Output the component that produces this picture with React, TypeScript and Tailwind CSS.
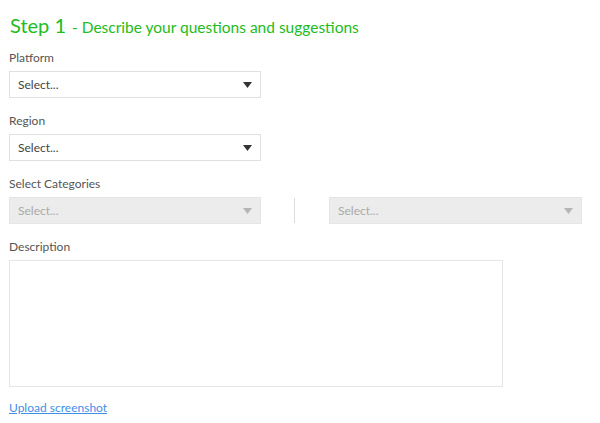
import React from "react";

function Caret({ disabled }: { disabled?: boolean }) {
  return (
    <svg width="9" height="6" viewBox="0 0 9 6" className="shrink-0">
      <path d="M0 0 L9 0 L4.5 6 Z" fill={disabled ? "#b5b5b5" : "#333"} />
    </svg>
  );
}

function SelectBox({ disabled, width }: { disabled?: boolean; width: string }) {
  return (
    <div
      className={`${width} h-[27px] flex items-center justify-between pl-[8px] pr-[8px] border ${
        disabled ? "bg-[#ececec] border-[#e5e5e5] text-[#aaaaaa]" : "bg-white border-[#e0e0e0] text-[#444444]"
      } text-[12px]`}
    >
      <span>Select...</span>
      <Caret disabled={disabled} />
    </div>
  );
}

function Label({ children }: { children: React.ReactNode }) {
  return <div className="text-[12px] leading-[14px] text-[#555555] mb-[6px]">{children}</div>;
}

export default function App() {
  return (
    <div
      className="w-[600px] h-[423px] bg-white pl-[9px] pt-[13px] overflow-hidden"
      style={{ fontFamily: "Lato, 'Open Sans', sans-serif" }}
    >
      <h1 className="flex items-baseline text-[#22bb22] leading-[24px] mb-[12px]">
        <span className="text-[20px] ml-[1px]">Step 1</span>
        <span className="text-[15.5px] ml-[6px]">- Describe your questions and suggestions</span>
      </h1>

      <Label>Platform</Label>
      <SelectBox width="w-[252px]" />

      <div className="mt-[16px]">
        <Label>Region</Label>
        <SelectBox width="w-[252px]" />
      </div>

      <div className="mt-[16px]">
        <Label>Select Categories</Label>
        <div className="flex items-center">
          <SelectBox disabled width="w-[252px]" />
          <div className="w-[1px] h-[25px] bg-[#dddddd] ml-[33px] mr-[34px]" />
          <SelectBox disabled width="w-[253px]" />
        </div>
      </div>

      <div className="mt-[16px]">
        <Label>Description</Label>
        <textarea className="block w-[494px] h-[127px] border border-[#e5e5e5] resize-none outline-none" />
      </div>

      <a href="#" className="inline-block mt-[12px] text-[12px] text-[#3f8fe6] underline">
        Upload screenshot
      </a>
    </div>
  );
}
